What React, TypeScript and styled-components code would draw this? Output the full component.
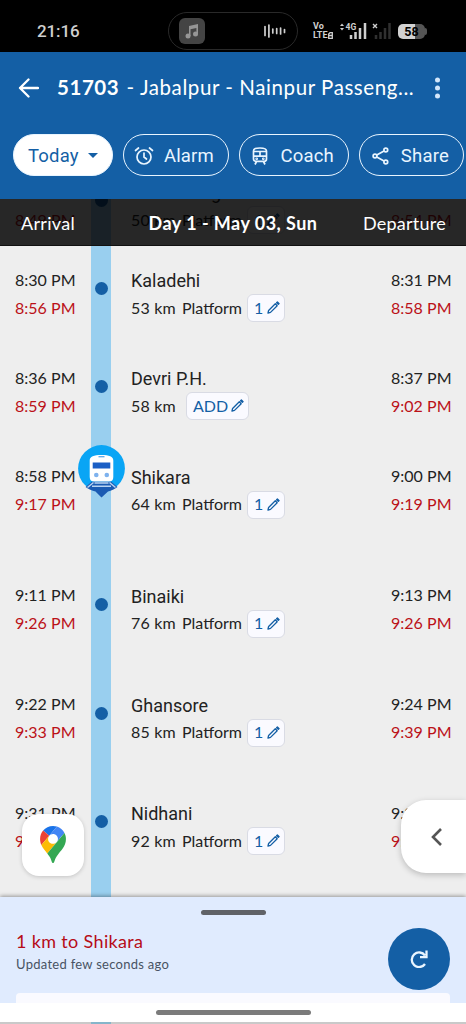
import React from 'react';
import styled, { createGlobalStyle } from 'styled-components';

const Global = createGlobalStyle`
  * { box-sizing: border-box; }
  body { margin: 0; background: #eee; font-family: Lato, "Liberation Sans", sans-serif; }
  svg { display: block; flex: none; }
`;
const BLUE = '#145fa5';

const Screen = styled.div`
  width: 466px; height: 1024px; display: flex; flex-direction: column; overflow: hidden; background: #eee;
`;
const StatusBar = styled.div`
  height: 52px; flex: none; background: #000; color: #cfcfcf; display: flex; align-items: center; padding: 10px 36px 0 37px;
`;
const Clock = styled.div`
  font: 500 17px Roboto, sans-serif; letter-spacing: -0.1px; width: 131px; line-height: 20px;
`;
const Island = styled.div`
  width: 130px; height: 38px; border: 1px solid #292929; border-radius: 19px; display: flex; align-items: center;
  justify-content: space-between; padding: 0 11px 0 10px; margin-right: 14px;
`;
const MusicTile = styled.div`
  width: 26px; height: 26px; border-radius: 6px; background: #444; display: grid; place-items: center;
`;
const Volte = styled.div`
  font: 700 9px/9px Roboto, sans-serif; width: 28px; padding-left: 1px;
  div { display: flex; align-items: center; }
  svg { margin-left: 0.5px; }
`;
const Signals = styled.div`width: 58px;`;
const Battery = styled.div`
  width: 27px; height: 15px; border-radius: 5px; color: #000; font: 700 12.5px/16px Roboto, sans-serif; text-align: center;
  background: linear-gradient(90deg, #d2d2d2 62%, #555 62%); position: relative;
  &::after { content: ''; position: absolute; right: -2px; top: 4px; width: 2px; height: 7px; background: #555; border-radius: 0 2px 2px 0; }
`;
const AppBar = styled.header`
  height: 147px; flex: none; background: ${BLUE}; color: #fff;
`;
const TitleRow = styled.div`
  height: 72px; display: flex; align-items: center; padding-left: 18px;
`;
const Title = styled.h1`
  margin: -2px 0 0 18px; width: 372px; font: 400 20.5px/28px Lato, sans-serif; letter-spacing: 0.58px; white-space: nowrap;
  b { font-weight: 700; letter-spacing: 0.55px; margin-right: 1.5px; }
`;
const Chips = styled.div`display: flex; padding: 10px 0 0 13px;`;
const Chip = styled.button<{ $w: number; $gap?: number; $filled?: boolean; $pad?: number }>`
  width: ${p => p.$w}px; height: 42px; flex: none; border-radius: 21px; border: 1.4px solid #e9f5ff; margin-right: ${p => p.$gap ?? 10}px;
  background: ${p => (p.$filled ? '#fff' : 'transparent')}; color: ${p => (p.$filled ? BLUE : '#e9f5ff')};
  font: 400 18.5px/24px Roboto, sans-serif; letter-spacing: 0.2px; display: flex; align-items: center; justify-content: space-between;
  padding: 1px 14px 0 ${p => p.$pad ?? 10}px;
`;
const Timeline = styled.main`
  height: 698px; flex: none; position: relative; overflow: hidden;
`;
const DayHeader = styled.div`
  position: absolute; inset: 0 0 auto 0; height: 47px; background: rgba(0, 0, 0, 0.84); color: #fff; z-index: 2;
  display: grid; grid-template-columns: 127px 212px 127px; align-items: center; font-size: 18px; border-bottom: 1px solid #111;
  padding-top: 1px;
  span { padding-left: 21px; letter-spacing: 0.3px; }
  strong { text-align: center; letter-spacing: 0.45px; }
  span:last-child { padding: 0 20px 0 0; text-align: right; letter-spacing: 0.25px; }
`;
const List = styled.div`margin-top: -26px;`;
const Row = styled.div<{ $h: number }>`
  height: ${p => p.$h}px; display: grid; grid-template-columns: 91px 20px 1fr 91px;
`;
const Times = styled.div<{ $right?: boolean }>`
  padding: 4.5px 0 0 ${p => (p.$right ? 0 : 15)}px; ${p => p.$right && 'margin-left: 16px;'}
  font-size: 16px; line-height: 28px; letter-spacing: 0.02px; color: #222; white-space: nowrap;
  div + div { color: #bb1118; }
`;
const Rail = styled.div`
  background: #99cfef; padding: 21px 0 0 3.5px; position: relative;
`;
const Dot = styled.div`width: 13px; height: 13px; border-radius: 50%; background: ${BLUE};`;
const TrainPin = styled.svg`position: absolute; left: -13.5px; top: -12.5px; z-index: 1;`;
const Station = styled.div`padding: 6px 0 0 20px; color: #222;`;
const Name = styled.div`font: 400 18px/28px Roboto, sans-serif;`;
const Meta = styled.div`
  height: 28px; margin-top: -1px; display: flex; align-items: center; font-size: 16px; letter-spacing: 0.2px; white-space: nowrap; color: #222;
`;
const Km = styled.span`width: 51px; margin-top: -2px;`;
const Platform = styled.span`width: 66px; margin-top: -2px; letter-spacing: 0;`;
const Edit = styled.button<{ $add?: boolean }>`
  width: ${p => (p.$add ? 63 : 38)}px; height: 28px; border: 1px solid #d9dbe4; border-radius: 6px; background: #fafaff; color: ${BLUE};
  margin-left: ${p => (p.$add ? 4 : -1)}px; padding: 0 4px 1px 6px; display: flex; align-items: center; justify-content: space-between; flex: none;
  font: 400 16px/20px Lato, sans-serif; letter-spacing: 0;
`;
const MapsButton = styled.button`
  position: absolute; left: 22px; top: 615px; width: 62px; height: 62px; border: 0; border-radius: 17px; background: #fff;
  box-shadow: 0 1px 4px rgba(0, 0, 0, 0.18); display: grid; place-items: center; padding: 0 0 2px; z-index: 2;
`;
const Drawer = styled.button`
  position: absolute; right: 0; top: 601px; width: 65px; height: 73px; border: 0; border-radius: 25px 0 0 25px; background: #fff;
  box-shadow: 0 2px 6px rgba(0, 0, 0, 0.22); z-index: 2; padding: 0 0 0 30px; display: flex; align-items: center;
`;
const Sheet = styled.section`
  height: 106px; flex: none; background: #e0ebfe; box-shadow: 0 -1px 4px rgba(0, 0, 0, 0.38); position: relative; z-index: 3;
  display: flex; flex-direction: column; align-items: center;
`;
const Handle = styled.div`width: 65px; height: 5px; border-radius: 3px; background: #606267; margin-top: 13px; flex: none;`;
const SheetBody = styled.div`
  align-self: stretch; flex: none; height: 78px; padding: 13px 16px 0 16px; display: flex; justify-content: space-between;
`;
const Headline = styled.div`
  font-size: 18px; line-height: 24px; color: #b60c18; letter-spacing: 0.34px; padding-top: 1px;
`;
const Updated = styled.div`font-size: 13px; line-height: 20px; color: #485363; letter-spacing: 0.28px; padding-top: 1px;`;
const Refresh = styled.button`
  width: 62px; height: 62px; border: 0; border-radius: 50%; background: ${BLUE}; display: grid; place-items: center; padding: 0;
`;
const NextCard = styled.div`width: 434px; height: 10px; background: #fafaff; border-radius: 4px 4px 0 0;`;
const NavBar = styled.div`
  height: 19px; flex: none; background: #fff; display: grid; place-items: center; z-index: 3;
  &::after { content: ''; width: 155px; height: 5px; border-radius: 3px; background: #7b7b7b; margin-top: -1px; }
`;
const Tail = styled.div`
  height: 2px; flex: none; background: linear-gradient(90deg, #c9c9c9 91px, #86b5ca 91px 111px, #c9c9c9 111px);
`;

const Pencil = () => (
  <svg width="13" height="13" viewBox="0 0 13 13" fill="none" stroke={BLUE} strokeWidth="1.3" strokeLinejoin="round">
    <path d="M1 12l.6-2.500L8.300 2.800l1.900 1.900-6.700 6.700z" />
    <path d="M9.600 1.700l.8-.8 1.700 1.700-.8.8z" fill={BLUE} />
  </svg>
);

const Train = () => (
  <TrainPin width="47" height="54" viewBox="0 0 47 54">
    <circle cx="23.5" cy="23.5" r="23.4" fill="#09a5f5" />
    <path d="M14 36.500h19l6.500 5.500c-3 2.300-6 3.700-9.500 4.600L23.500 52.500 17.500 46.600c-3.500-.9-7-2.300-10-4.600z" fill="#1b5bb3" />
    <path d="M15.500 37.500L9.500 42.500M31.500 37.500l6 5M16.500 38h14M14 41.300h19" stroke="#b9d4f2" strokeWidth="1.500" fill="none" />
    <path d="M11.700 15.500c0-4 4-5.500 11.800-5.500s11.800 1.500 11.800 5.500v16.500c0 3-1.500 4.500-4.500 4.500H16.200c-3 0-4.500-1.500-4.500-4.500z" fill="#fff" />
    <rect x="14.700" y="17.500" width="17.600" height="6" fill="#1b5fc5" />
    <circle cx="18.300" cy="30" r="2.300" fill="#7eb2ee" /><circle cx="28.800" cy="30" r="2.300" fill="#7eb2ee" />
    <path d="M20.500 11.700h6" stroke="#5ca9e8" strokeWidth="1.300" />
  </TrainPin>
);

const stops = [
  { h: 88, n: 'Sukri Mangela', km: 50, a: '8:24 PM', a2: '8:49 PM', d: '8:25 PM', d2: '8:54 PM' },
  { h: 98, n: 'Kaladehi', km: 53, a: '8:30 PM', a2: '8:56 PM', d: '8:31 PM', d2: '8:58 PM' },
  { h: 98.5, n: 'Devri P.H.', km: 58, a: '8:36 PM', a2: '8:59 PM', d: '8:37 PM', d2: '9:02 PM', add: true },
  { h: 119, n: 'Shikara', km: 64, a: '8:58 PM', a2: '9:17 PM', d: '9:00 PM', d2: '9:19 PM', here: true },
  { h: 109, n: 'Binaiki', km: 76, a: '9:11 PM', a2: '9:26 PM', d: '9:13 PM', d2: '9:26 PM' },
  { h: 108.5, n: 'Ghansore', km: 85, a: '9:22 PM', a2: '9:33 PM', d: '9:24 PM', d2: '9:39 PM' },
  { h: 109, n: 'Nidhani', km: 92, a: '9:31 PM', a2: '9:42 PM', d: '9:32 PM', d2: '9:47 PM' },
];

export default function App() {
  return (
    <Screen>
      <Global />
      <StatusBar>
        <Clock>21:16</Clock>
        <Island>
          <MusicTile>
            <svg width="14" height="16" viewBox="0 0 14 16" fill="#969696">
              <circle cx="3" cy="13" r="2.500" /><circle cx="10.500" cy="11" r="2.500" />
              <path d="M4 3l9-2v10h-1.600V5L5.500 6.300V13H4z" />
            </svg>
          </MusicTile>
          <svg width="22" height="14" viewBox="0 0 22 14" stroke="#cfcfcf" strokeWidth="1.700" strokeLinecap="round">
            <path d="M1 2.500v9M4.900 1v12M8.800 5v4M12.700 4.500v5M16.600 4v6M20.500 5.500v3" />
          </svg>
        </Island>
        <Volte>
          <div>Vo</div>
          <div>LTE<svg width="5" height="7" viewBox="0 0 5 7" fill="none" stroke="#cfcfcf" strokeWidth="1.300"><path d="M.7 7V2L2 .7h2.300v5.600H.7M.7 3.500h3.600" /></svg></div>
        </Volte>
        <Signals>
          <svg width="52" height="18" viewBox="0 0 52 18">
            <path d="M0 4l2-2.500L4 4zM0 6l2 2.500L4 6z" fill="#cfcfcf" />
            <text x="5.500" y="7.500" fontSize="8.500" fontWeight="700" fontFamily="Roboto" fill="#cfcfcf">4G</text>
            <path d="M11 13v4M15.500 10v7M20 6v11M25 1v16" stroke="#cfcfcf" strokeWidth="2.500" />
            <path d="M33 2l4 4M37 2l-4 4" stroke="#cfcfcf" strokeWidth="1.400" />
            <path d="M36 13v4M40.500 10v7M45 6v11M49.500 1v16" stroke="#303030" strokeWidth="2.500" />
          </svg>
        </Signals>
        <Battery>58</Battery>
      </StatusBar>
      <AppBar>
        <TitleRow>
          <svg width="21" height="20" viewBox="0 0 21 20" fill="none" stroke="#fff" strokeWidth="2.300" strokeLinecap="round" strokeLinejoin="round">
            <path d="M20 10H2M10.500 1.500L2 10l8.500 8.500" />
          </svg>
          <Title><b>51703</b> - Jabalpur - Nainpur Passeng...</Title>
          <svg width="16" height="22" viewBox="0 0 16 22" fill="#d4e7fb">
            <circle cx="8.500" cy="3" r="2.500" /><circle cx="8.500" cy="11" r="2.500" /><circle cx="8.500" cy="19" r="2.500" />
          </svg>
        </TitleRow>
        <Chips>
          <Chip $w={100} $filled $pad={14}>Today<svg width="10" height="5" viewBox="0 0 10 5"><path d="M0 0h10L5 5z" fill={BLUE} /></svg></Chip>
          <Chip $w={106}>
            <svg width="20" height="20" viewBox="0 0 20 20" fill="none" stroke="#e9f5ff" strokeWidth="1.700" strokeLinecap="round">
              <circle cx="10" cy="11" r="7" /><path d="M10 7v4l2.500 2M1.500 4.500l3-2.500M18.500 4.500l-3-2.500" />
            </svg>Alarm
          </Chip>
          <Chip $w={110} $pad={12}>
            <svg width="16" height="18" viewBox="0 0 16 18" fill="none" stroke="#e9f5ff" strokeWidth="1.700">
              <path d="M1.500 4C1.500 1.500 4 1 8 1s6.500.5 6.500 3v8c0 1.500-1 2.300-2.300 2.300H3.800C2.500 14.300 1.500 13.500 1.500 12zM1.500 4.500h13M1.500 9.200h13M8 4.500v4.700M4.500 14.500L3 17.500M11.500 14.500l1.500 3" />
              <circle cx="4.700" cy="11.800" r=".5" /><circle cx="11.300" cy="11.800" r=".5" />
            </svg>Coach
          </Chip>
          <Chip $w={105} $gap={0} $pad={12}>
            <svg width="17" height="18" viewBox="0 0 17 18" fill="none" stroke="#e9f5ff" strokeWidth="1.700">
              <circle cx="3" cy="9" r="1.900" /><circle cx="13.800" cy="3" r="1.900" /><circle cx="13.800" cy="15" r="1.900" /><path d="M4.800 8L12 4M4.800 10l7.200 4" />
            </svg>Share
          </Chip>
        </Chips>
      </AppBar>
      <Timeline>
        <DayHeader><span>Arrival</span><strong>Day 1 - May 03, Sun</strong><span>Departure</span></DayHeader>
        <List>
          {stops.map(s => (
            <Row key={s.n} $h={s.h}>
              <Times><div>{s.a}</div><div>{s.a2}</div></Times>
              <Rail>{s.here ? <Train /> : <Dot />}</Rail>
              <Station>
                <Name>{s.n}</Name>
                <Meta>
                  <Km>{s.km} km</Km>
                  {!s.add && <Platform>Platform</Platform>}
                  <Edit $add={s.add}>{s.add ? 'ADD' : '1'}<Pencil /></Edit>
                </Meta>
              </Station>
              <Times $right><div>{s.d}</div><div>{s.d2}</div></Times>
            </Row>
          ))}
        </List>
        <MapsButton>
          <svg width="26" height="37" viewBox="0 0 92.300 132.300">
            <path fill="#1a73e8" d="M60.200 2.200C55.800.8 51 0 46.100 0 32 0 19.300 6.400 10.800 16.500l21.800 18.300L60.200 2.200z" />
            <path fill="#ea4335" d="M10.800 16.500C4.100 24.500 0 34.900 0 46.100c0 8.700 1.700 15.700 4.600 22l28-33.300-21.800-18.300z" />
            <path fill="#4285f4" d="M46.200 28.500c9.800 0 17.700 7.900 17.700 17.700 0 4.300-1.600 8.300-4.200 11.400 0 0 13.900-16.600 27.500-32.700-5.600-10.800-15.300-19-27-22.700L32.600 34.800c3.300-3.800 8.100-6.300 13.600-6.300" />
            <path fill="#fbbc04" d="M46.200 63.800c-9.800 0-17.700-7.900-17.700-17.700 0-4.300 1.500-8.300 4.100-11.300l-28 33.300c4.800 10.600 12.800 19.200 21 29.900l34.100-40.500c-3.300 3.900-8.100 6.300-13.500 6.300" />
            <path fill="#34a853" d="M59.100 109.200c15.400-24.100 33.300-35 33.300-63 0-7.700-1.900-14.900-5.200-21.300L25.600 98c2.600 3.400 5.300 7.300 7.900 11.300 9.400 14.500 6.800 23.100 12.800 23.100s3.400-8.700 12.800-23.200" />
          </svg>
        </MapsButton>
        <Drawer>
          <svg width="11" height="18" viewBox="0 0 11 18" fill="none" stroke="#555" strokeWidth="2.600"><path d="M10 1L2 9l8 8" /></svg>
        </Drawer>
      </Timeline>
      <Sheet>
        <Handle />
        <SheetBody>
          <div><Headline>1 km to Shikara</Headline><Updated>Updated few seconds ago</Updated></div>
          <Refresh>
            <svg width="18" height="18" viewBox="0 0 18 18" fill="none" stroke="#e9f5ff" strokeWidth="2.300">
              <path d="M15 5.500A7.300 7.300 0 1 0 15 14M16.500.5v6.700H10" />
            </svg>
          </Refresh>
        </SheetBody>
        <NextCard />
      </Sheet>
      <NavBar />
      <Tail />
    </Screen>
  );
}
